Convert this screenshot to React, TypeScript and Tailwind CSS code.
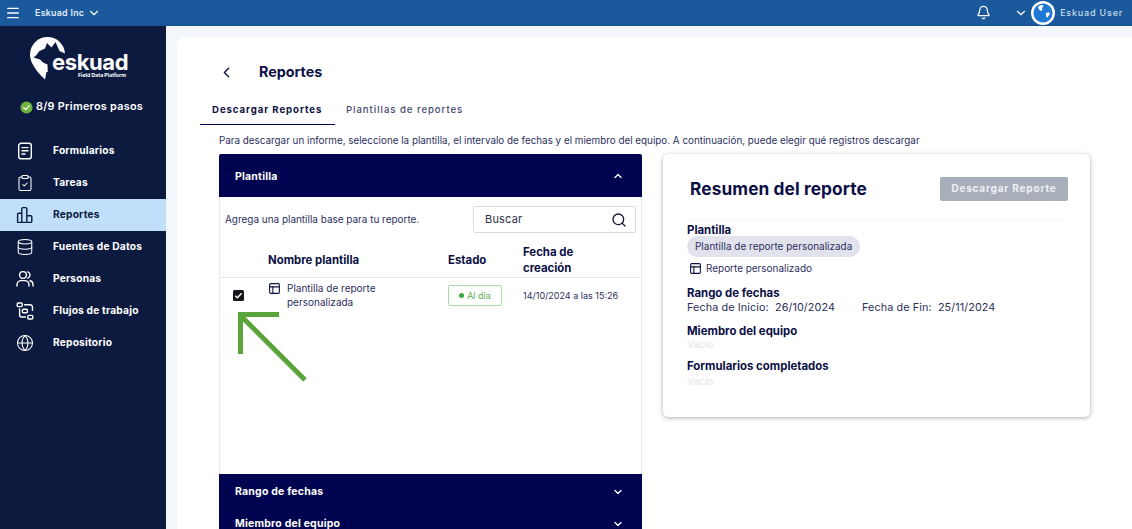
import { Bell, ChevronDown, ChevronLeft, ChevronUp, ClipboardCheck, Database, Globe, Menu, PanelsTopLeft, Search } from "lucide-react";

const FONT = "[font-family:Inter,'Liberation_Sans',sans-serif]";

const FormIcon = () => (
  <svg viewBox="0 0 18 18" fill="none" stroke="currentColor" strokeWidth="1.4" strokeLinecap="round" className="w-[18px] h-[18px]">
    <rect x="2.7" y="1.2" width="12.6" height="15.6" rx="2.4" />
    <path d="M6 5.6h6M6 8.8h6M6 12h3" />
  </svg>
);

const BarsIcon = () => (
  <svg viewBox="0 0 18 18" fill="none" stroke="currentColor" strokeWidth="1.4" strokeLinejoin="round" className="w-[18px] h-[18px]">
    <path d="M1.6 16.4V8.2a1 1 0 0 1 1-1h3.2v9.2H2.6a1 1 0 0 1-1-1ZM5.8 16.4V2.6a1 1 0 0 1 1-1h3a1 1 0 0 1 1 1v13.8ZM10.8 16.4V9.8h4a1 1 0 0 1 1 1v4.6a1 1 0 0 1-1 1Z" />
  </svg>
);

const PeopleIcon = () => (
  <svg viewBox="0 0 18 18" fill="none" stroke="currentColor" strokeWidth="1.4" strokeLinecap="round" className="w-[18px] h-[18px]">
    <circle cx="7" cy="5" r="3.4" />
    <path d="M1 16v-1.4A4.2 4.2 0 0 1 5.2 10.6h3.6A4.2 4.2 0 0 1 13 14.6V16M11.8 1.8a3.4 3.4 0 0 1 0 6.4M14 10.8a4 4 0 0 1 3 3.8V16" />
  </svg>
);

const FlowIcon = () => (
  <svg viewBox="0 0 18 18" fill="none" stroke="currentColor" strokeWidth="1.4" strokeLinecap="round" className="w-[18px] h-[18px]">
    <rect x="1.2" y="1" width="5" height="3.6" rx="1" />
    <rect x="6.4" y="7.2" width="5" height="3.6" rx="1" />
    <rect x="11.8" y="13.4" width="5" height="3.6" rx="1" />
    <path d="M8.5 2.8h5.6a2.4 2.4 0 0 1 2.4 2.4v3.2M3.6 7v6a2 2 0 0 0 2 2h3.8" />
  </svg>
);

const NAV = [
  { label: "Formularios", icon: <FormIcon /> },
  { label: "Tareas", icon: <ClipboardCheck size={18} strokeWidth={1.4} /> },
  { label: "Reportes", icon: <BarsIcon />, active: true },
  { label: "Fuentes de Datos", icon: <Database size={18} strokeWidth={1.4} /> },
  { label: "Personas", icon: <PeopleIcon /> },
  { label: "Flujos de trabajo", icon: <FlowIcon /> },
  { label: "Repositorio", icon: <Globe size={18} strokeWidth={1.4} /> },
];

function Logo() {
  return (
    <div className="relative h-[44px] w-[100px]">
      <svg viewBox="0 0 36 43" className="absolute left-0 top-0 w-[36px] h-[43px]">
        <circle cx="17.5" cy="17.5" r="17.5" fill="#fff" />
        <path d="M1.5 24.5C4 31 9 37 15 42.5L18 27Z" fill="#fff" />
        <path d="M36 17L29.5 14L25.5 5L21.5 10.5L17 6L15 11.5L9.5 14L6 18.5L3.5 20.5L10 22.5L13 25.5L17.5 27.5L18 43H36Z" fill="#0d1a40" />
      </svg>
      <span className="absolute left-[22px] top-[16px] text-[22px] leading-[18px] font-bold text-white tracking-[-0.4px]">eskuad</span>
      <span className="absolute left-[48px] top-[35px] text-[5.2px] leading-[6px] font-bold text-white whitespace-nowrap">Field Data Platform</span>
    </div>
  );
}

function Sidebar() {
  return (
    <aside className="w-[166px] shrink-0 bg-[#0d1a40] text-white flex flex-col">
      <div className="flex justify-center pt-[11px] pr-[6px]">
        <Logo />
      </div>
      <div className="flex items-center gap-[3px] pl-[20px] mt-[18px] h-[16px]">
        <svg viewBox="0 0 14 14" className="w-[13px] h-[13px]">
          <circle cx="7" cy="7" r="6.5" fill="#6fb23f" />
          <path d="M4 7.2l2.1 2.1L10 5" fill="none" stroke="#fff" strokeWidth="1.4" strokeLinecap="round" strokeLinejoin="round" />
        </svg>
        <span className="text-[10.8px] font-semibold tracking-[0.3px]">8/9 Primeros pasos</span>
      </div>
      <nav className="mt-[20px] flex flex-col">
        {NAV.map((item) => (
          <div
            key={item.label}
            className={`h-[32px] flex items-center pl-[16px] ${item.active ? "bg-[#bfdffb] text-[#0d1a40]" : ""}`}
          >
            <span className="w-[18px] flex justify-center">{item.icon}</span>
            <span className="ml-[19px] text-[10.2px] font-bold tracking-[0.2px]">{item.label}</span>
          </div>
        ))}
      </nav>
    </aside>
  );
}

function TopBar() {
  return (
    <header className="h-[26px] shrink-0 bg-[#1a5a9c] border-b border-[#174f8a] flex items-center text-white">
      <Menu size={16} strokeWidth={2} className="ml-[5px]" />
      <span className="ml-[14px] text-[8.8px] font-semibold tracking-[0.3px] text-[#e4eefa]">Eskuad Inc</span>
      <ChevronDown size={14} strokeWidth={2} className="ml-[3px]" />
      <Bell size={15} strokeWidth={2} className="ml-auto" />
      <ChevronDown size={14} strokeWidth={2} className="ml-[23px]" />
      <svg viewBox="0 0 24 24" className="w-[24px] h-[24px] ml-[3px]">
        <circle cx="12" cy="12" r="12" fill="#fff" />
        <circle cx="12" cy="12" r="9.6" fill="#1f78d1" />
        <path d="M8.5 4.6l3-.6 1 1.4-1.8 1.8 1 1.4-1.8 1.4-2-1.6-.8-2.2ZM15 12l3-.7 1 1.6-2.8 3.8-1.2-1.4Z" fill="#fff" />
      </svg>
      <span className="ml-[5px] mr-[9px] text-[9px] font-medium tracking-[0.8px] text-[#c9daee]">Eskuad User</span>
    </header>
  );
}

function AccordionBar({ title, open, className = "" }: { title: string; open?: boolean; className?: string }) {
  return (
    <div className={`bg-[#00034f] text-white flex items-center justify-between pl-[16px] pr-[18px] pt-[1px] ${className}`}>
      <span className="text-[10.5px] leading-[11px] font-bold tracking-[0.2px]">{title}</span>
      {open ? <ChevronUp size={12} strokeWidth={2.6} /> : <ChevronDown size={12} strokeWidth={2.6} />}
    </div>
  );
}

function TemplatePanel() {
  return (
    <section className="relative w-[423px] shrink-0 flex flex-col">
      <AccordionBar title="Plantilla" open className="h-[43px] rounded-t-[2px]" />
      <div className="h-[277px] border-x border-[#e8e9ef] flex flex-col">
        <div className="flex items-center justify-between pl-[5px] pr-[5px] pt-[9px]">
          <span className="text-[9.95px] text-[#2b2f5e]">Agrega una plantilla base para tu reporte.</span>
          <div className="w-[163px] h-[27px] border border-[#d8dae0] rounded-[2px] flex items-center justify-between pl-[11px] pr-[8px]">
            <span className="text-[11px] text-[#2d2f45] tracking-[0.2px]">Buscar</span>
            <Search size={16} strokeWidth={2} className="text-[#15172e]" />
          </div>
        </div>
        <div className="grid grid-cols-[48px_180px_75px_1fr] items-center h-[39px] mt-[6px] pt-[3px] border-b border-[#e6e7ec] text-[11.4px] leading-[16px] font-bold text-[#0b0f45]">
          <span />
          <span>Nombre plantilla</span>
          <span>Estado</span>
          <span>Fecha de<br />creación</span>
        </div>
        <div className="grid grid-cols-[48px_180px_75px_1fr] pt-[5px] text-[9px] text-[#2b2f5e]">
          <span className="pl-[13px] pt-[7px]">
            <span className="w-[11px] h-[11px] rounded-[1.5px] bg-[#15151a] flex items-center justify-center">
              <svg viewBox="0 0 10 10" className="w-[9px] h-[9px]">
                <path d="M1.5 5.2l2.3 2.3L8.5 2.6" fill="none" stroke="#fff" strokeWidth="1.6" />
              </svg>
            </span>
          </span>
          <div className="flex gap-[6px]">
            <PanelsTopLeft size={13} strokeWidth={2} className="text-[#0b0f45] mt-[-1px] shrink-0" />
            <span className="leading-[14px] w-[110px] mt-[-2px] text-[10px]">Plantilla de reporte personalizada</span>
          </div>
          <div className="pt-[2px]">
            <span className="w-[54px] h-[21px] border border-[#a9dba4] rounded-[2px] flex items-center justify-center gap-[3px] text-[#5aae55]">
              <span className="w-[5px] h-[5px] rounded-full bg-[#3fa63a]" />
              Al día
            </span>
          </div>
          <span className="pt-[6px] whitespace-nowrap">14/10/2024 a las 15:26</span>
        </div>
      </div>
      <AccordionBar title="Rango de fechas" className="h-[34px] shrink-0" />
      <AccordionBar title="Miembro del equipo" className="h-[30px] shrink-0" />
      {/* annotation arrow drawn over the table */}
      <svg viewBox="0 0 70 72" className="absolute left-[18px] top-[158px] w-[70px] h-[72px]">
        <path d="M1 2.5h41M3.5 1v41M3 3l65 65" fill="none" stroke="#5aa43b" strokeWidth="5" />
      </svg>
    </section>
  );
}

function SummaryCard() {
  return (
    <section className="w-[427px] h-[263px] shrink-0 bg-white rounded-[5px] shadow-[0_1px_4px_rgba(40,45,70,0.4)] flex flex-col px-[24px]">
      <div className="h-[66px] flex items-center justify-between pl-[3px] border-b border-[#f3f4f6] pt-[4px]">
        <h2 className="text-[17.3px] font-bold text-[#0b0f45] tracking-[0.1px]">Resumen del reporte</h2>
        <button type="button" className="w-[128px] h-[24px] mr-[-2px] rounded-[2px] bg-[#a9afba] text-[#eef0f3] text-[10px] font-bold tracking-[0.8px]">
          Descargar Reporte
        </button>
      </div>
      <div className="text-[#0b0f45]">
        <h3 className="mt-[3px] text-[11.4px] leading-[14px] font-bold">Plantilla</h3>
        <span className="w-fit mt-[-1px] flex items-center h-[21px] px-[8px] rounded-full bg-[#e1e2ec] text-[9.9px] text-[#2b2f5e] tracking-[0.05px]">
          Plantilla de reporte personalizada
        </span>
        <div className="flex items-center gap-[4px] pl-[2px] mt-[4px] h-[14px] text-[9.95px] text-[#2b2f5e]">
          <PanelsTopLeft size={13} strokeWidth={2} className="text-[#0b0f45]" />
          Reporte personalizado
        </div>
        <h3 className="mt-[11px] text-[11.4px] leading-[14px] font-bold">Rango de fechas</h3>
        <div className="flex text-[10.8px] leading-[15px] text-[#2b2f5e] tracking-[0.1px]">
          <span className="w-[175px]">Fecha de Inicio:&nbsp; 26/10/2024</span>
          <span>Fecha de Fin:&nbsp; 25/11/2024</span>
        </div>
        <h3 className="mt-[9px] text-[11.4px] leading-[14px] font-bold">Miembro del equipo</h3>
        <p className="text-[10px] leading-[12px] text-[#e3e5ea]">Vacío</p>
        <h3 className="mt-[9px] text-[11.4px] leading-[14px] font-bold">Formularios completados</h3>
        <p className="mt-[2px] text-[10px] leading-[12px] text-[#e3e5ea]">Vacío</p>
      </div>
    </section>
  );
}

export default function App() {
  return (
    <div className={`h-[529px] w-[1132px] overflow-hidden flex flex-col bg-[#f3f7fc] ${FONT}`}>
      <TopBar />
      <div className="flex flex-1 min-h-0">
        <Sidebar />
        <main className="flex-1 min-w-0 pl-[11px] pt-[11px]">
          <div className="h-full bg-white rounded-tl-[8px] overflow-hidden">
            <div className="flex items-center h-[20px] mt-[25px] pl-[41px]">
              <ChevronLeft size={17} strokeWidth={2} className="text-[#0b0f45]" />
              <h1 className="ml-[24px] text-[14.3px] font-bold text-[#0b0f45]">Reportes</h1>
            </div>
            <div className="flex mt-[15px] pl-[23px] h-[28px]">
              <div className="w-[135px] border-b-[1.5px] border-[#00034f] pl-[12px] pt-[6px] text-[9.6px] font-bold tracking-[0.95px] text-[#0b0f45] whitespace-nowrap">
                Descargar Reportes
              </div>
              <div className="pl-[11px] pt-[6px] text-[9.6px] font-medium tracking-[0.95px] text-[#444770] whitespace-nowrap">
                Plantillas de reportes
              </div>
            </div>
            <p className="pl-[42px] mt-[8px] text-[9.85px] leading-[15px] text-[#2b2f5e] whitespace-nowrap">
              Para descargar un informe, seleccione la plantilla, el intervalo de fechas y el miembro del equipo. A continuación, puede elegir qué registros descargar
            </p>
            <div className="flex gap-[21px] pl-[42px] mt-[6px]">
              <TemplatePanel />
              <SummaryCard />
            </div>
          </div>
        </main>
      </div>
    </div>
  );
}
